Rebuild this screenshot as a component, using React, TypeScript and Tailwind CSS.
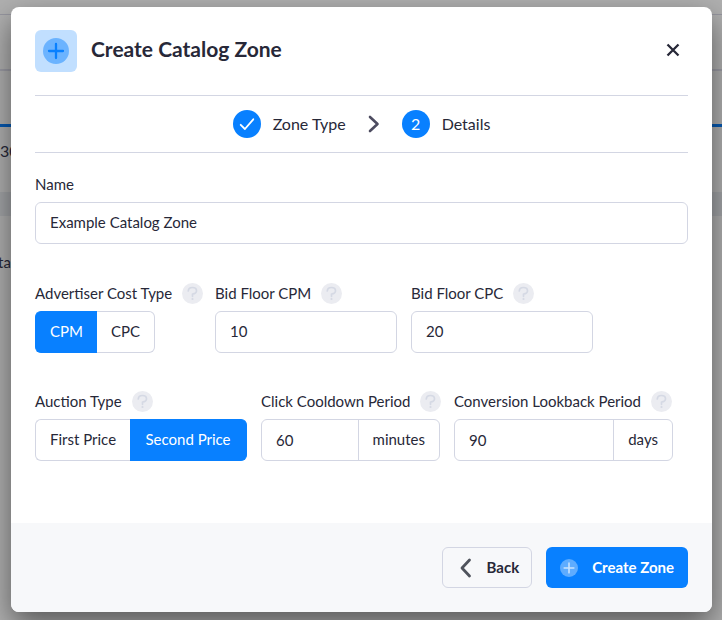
import { useState } from "react";
import type { ReactNode } from "react";
import clsx from "clsx";

const inputClass =
  "h-[42px] w-full min-w-0 rounded-md border border-[#d3d6e3] bg-white px-3.5 pb-0.5 outline-none";

function PlusCircle({ className = "", circle = "", plus = "" }) {
  return (
    <svg viewBox="0 0 26 26" className={className} fill="none" aria-hidden="true">
      <circle cx="13" cy="13" r="13" className={circle} />
      <path
        d="M13 6v14M6 13h14"
        strokeWidth="2.3"
        strokeLinecap="round"
        className={plus}
      />
    </svg>
  );
}

function HelpButton({ label }: { label: string }) {
  return (
    <button
      type="button"
      aria-label={`Help: ${label}`}
      className="h-[21px] w-[21px] shrink-0 rounded-full bg-[#ebecf1]"
    >
      <svg viewBox="0 0 21 21" fill="none" aria-hidden="true">
        <path
          d="M6.3 8C6.4 5.7 8 4.5 10.4 4.5c2.4 0 4.1 1.3 4.1 3.3 0 2.1-1.7 3-4 3.2v2.3"
          stroke="#d5d9e4"
          strokeWidth="1.7"
          strokeLinecap="round"
          strokeLinejoin="round"
        />
        <circle cx="10.5" cy="16" r="1.1" fill="#d5d9e4" />
      </svg>
    </button>
  );
}

type FieldProps = {
  label: string;
  id: string;
  className?: string;
  help?: boolean;
  children: ReactNode;
};

function Field({ label, id, className, help = true, children }: FieldProps) {
  return (
    <div className={className}>
      <div className="mb-[7px] flex h-[21px] items-center gap-2.5 whitespace-nowrap">
        <label id={`${id}-label`} htmlFor={id} className="pb-0.5">
          {label}
        </label>
        {help && <HelpButton label={label} />}
      </div>
      {children}
    </div>
  );
}

type ToggleProps = {
  id: string;
  options: string[];
  value: string;
  onChange: (value: string) => void;
  className?: string;
};

function Toggle({ id, options, value, onChange, className }: ToggleProps) {
  return (
    <div
      id={id}
      role="group"
      aria-labelledby={`${id}-label`}
      className={clsx("flex", className)}
    >
      {options.map((option) => (
        <button
          key={option}
          type="button"
          aria-pressed={option === value}
          onClick={() => onChange(option)}
          className={clsx(
            "h-[42px] border px-3.5 pb-0.5 whitespace-nowrap first:rounded-l-md first:border-r-0 last:grow last:rounded-r-md last:border-l-0",
            option === value
              ? "border-[#0880ff] bg-[#0880ff] text-white"
              : "border-[#d3d6e3] bg-white"
          )}
        >
          {option}
        </button>
      ))}
    </div>
  );
}

function UnitInput({ id, value, unit }: { id: string; value: string; unit: string }) {
  return (
    <div className="flex h-[42px] overflow-hidden rounded-md border border-[#d3d6e3] bg-white">
      <input
        id={id}
        defaultValue={value}
        className="w-0 min-w-0 flex-1 px-3.5 outline-none"
      />
      <span className="flex items-center border-l border-[#d3d6e3] px-3.5 pb-0.5">{unit}</span>
    </div>
  );
}

function Backdrop() {
  return (
    <div className="absolute inset-0 -z-10 bg-[#b0b0b0]" aria-hidden="true">
      <div className="h-[15px] border-b border-[#9797a0]" />
      <div className="h-14 border-b-2 border-[#9c9ca5]" />
      <div className="h-14 border-b-[3px] border-[#0659b2]" />
      <p className="h-[65px] pt-3 text-base leading-6">30</p>
      <div className="h-6 bg-[#a3a5a8]" />
      <p className="-ml-0.5 pt-[34px] leading-6">ta</p>
    </div>
  );
}

export default function App() {
  const [costType, setCostType] = useState("CPM");
  const [auctionType, setAuctionType] = useState("Second Price");

  return (
    <div className="relative isolate min-h-screen overflow-hidden pt-[7px] pr-2.5 pb-2 pl-[11px] font-['Lato','Liberation_Sans',sans-serif] text-[15px] leading-5 text-[#272838]">
      <Backdrop />

      <div
        role="dialog"
        aria-labelledby="dialog-title"
        className="overflow-hidden rounded-lg bg-white shadow-[0_12px_30px_rgba(0,0,0,0.5)]"
      >
        <header className="mx-6 flex items-center border-b border-[#d3d6e3] py-[23px]">
          <span className="flex size-[42px] items-center justify-center rounded-md bg-[#c1dfff]">
            <PlusCircle
              className="size-[26px]"
              circle="fill-[#6bb3ff]"
              plus="stroke-[#0880ff]"
            />
          </span>
          <h1 id="dialog-title" className="ml-3.5 flex-1 pb-1 text-[21px] leading-7 font-bold">
            Create Catalog Zone
          </h1>
          <button type="button" aria-label="Close" className="mr-2 pb-0.5">
            <svg width="14" height="14" viewBox="0 0 14 14" fill="none">
              <path d="M1.5 1.5l11 11M12.500 1.500l-11 11" stroke="currentColor" strokeWidth="2.3" />
            </svg>
          </button>
        </header>

        <ol className="mx-6 flex h-[57px] items-center justify-center border-b border-[#d3d6e3] text-base">
          <li className="flex items-center gap-3">
            <span className="flex size-7 items-center justify-center rounded-full bg-[#0880ff]">
              <svg width="28" height="28" viewBox="0 0 28 28" fill="none" aria-hidden="true">
                <path
                  d="M7.7 14.8l4.2 4.2L20.3 9.3"
                  stroke="white"
                  strokeWidth="1.8"
                  strokeLinecap="round"
                  strokeLinejoin="round"
                />
              </svg>
            </span>
            <span>Zone Type</span>
          </li>
          <li className="flex items-center gap-3" aria-current="step">
            <svg
              width="12"
              height="18"
              viewBox="0 0 12 18"
              fill="none"
              className="mr-2.5 ml-[22px]"
              aria-hidden="true"
            >
              <path
                d="M2 2l7.500 7L2 16"
                stroke="#4d4c60"
                strokeWidth="2.6"
                strokeLinecap="round"
                strokeLinejoin="round"
              />
            </svg>
            <span className="flex size-7 items-center justify-center rounded-full bg-[#0880ff] text-white">
              2
            </span>
            <span>Details</span>
          </li>
        </ol>

        <form className="px-6 pt-[21px] pb-[62px]">
          <Field label="Name" id="name" help={false}>
            <input id="name" defaultValue="Example Catalog Zone" className={inputClass} />
          </Field>

          <div className="mt-[39px] flex flex-wrap gap-3.5">
            <Field label="Advertiser Cost Type" id="cost-type" className="w-[166px]">
              <Toggle
                id="cost-type"
                options={["CPM", "CPC"]}
                value={costType}
                onChange={setCostType}
                className="w-fit"
              />
            </Field>
            <Field label="Bid Floor CPM" id="bid-cpm" className="w-[182px]">
              <input id="bid-cpm" defaultValue="10" className={inputClass} />
            </Field>
            <Field label="Bid Floor CPC" id="bid-cpc" className="w-[182px]">
              <input id="bid-cpc" defaultValue="20" className={inputClass} />
            </Field>
          </div>

          <div className="mt-[38px] flex flex-wrap gap-3.5">
            <Field label="Auction Type" id="auction-type" className="w-[212px]">
              <Toggle
                id="auction-type"
                options={["First Price", "Second Price"]}
                value={auctionType}
                onChange={setAuctionType}
              />
            </Field>
            <Field label="Click Cooldown Period" id="cooldown" className="w-[179px]">
              <UnitInput id="cooldown" value="60" unit="minutes" />
            </Field>
            <Field label="Conversion Lookback Period" id="lookback" className="w-[219px]">
              <UnitInput id="lookback" value="90" unit="days" />
            </Field>
          </div>
        </form>

        <footer className="flex justify-end gap-3.5 bg-[#f7f8fa] p-6 font-bold">
          <button
            type="button"
            className="flex h-[41px] items-center gap-3.5 rounded-md border border-[#d3d6e3] pr-3 pl-4"
          >
            <svg width="14" height="20" viewBox="0 0 14 20" fill="none" aria-hidden="true">
              <path
                d="M10.500 2L3 10l7.500 8"
                stroke="#4f535c"
                strokeWidth="2.8"
                strokeLinecap="round"
                strokeLinejoin="round"
              />
            </svg>
            <span className="pb-0.5">Back</span>
          </button>
          <button
            type="button"
            className="flex h-[41px] items-center gap-3.5 rounded-md bg-[#0880ff] px-3.5 text-white"
          >
            <PlusCircle
              className="size-[18px]"
              circle="fill-[#5eacff]"
              plus="stroke-[#c9e3ff]"
            />
            <span className="pb-0.5">Create Zone</span>
          </button>
        </footer>
      </div>
    </div>
  );
}
